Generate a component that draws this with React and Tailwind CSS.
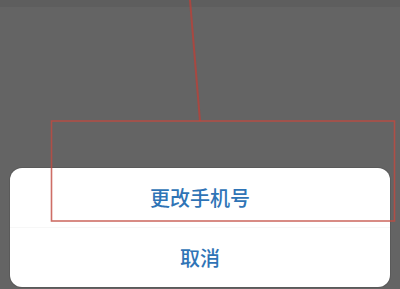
import React from "react";

const font = { fontFamily: '"Noto Sans CJK SC", "Noto Sans", sans-serif' };

const Annotation = () => (
  <svg
    className="absolute inset-0 pointer-events-none"
    width="400"
    height="289"
    viewBox="0 0 400 289"
  >
    <line x1="190" y1="0" x2="200" y2="121" stroke="#b0453e" strokeWidth="2" opacity="0.9" />
    <rect
      x="51.5"
      y="121"
      width="343"
      height="100"
      fill="none"
      stroke="#c24a40"
      strokeWidth="1.6"
      opacity="0.8"
    />
  </svg>
);

const App = () => {
  return (
    <div className="relative w-[400px] h-[289px] overflow-hidden bg-[#646464]" style={font}>
      <div className="h-[7px] bg-[#5e5e5e]" />
      <div className="absolute inset-0 flex flex-col justify-end px-[10px] pb-[2px]">
        <div className="bg-white rounded-[12px] overflow-hidden shadow-[0_0_0_1px_#5a5a5a]">
          <button className="w-full h-[59px] flex items-center justify-center text-[20px] font-medium text-[#2f74b6]">
            更改手机号
          </button>
          <div className="h-px bg-[#f7f7f7]" />
          <button className="w-full h-[59px] flex items-center justify-center text-[20px] font-medium text-[#2f74b6]">
            取消
          </button>
        </div>
      </div>
      <Annotation />
    </div>
  );
};

export default App;
